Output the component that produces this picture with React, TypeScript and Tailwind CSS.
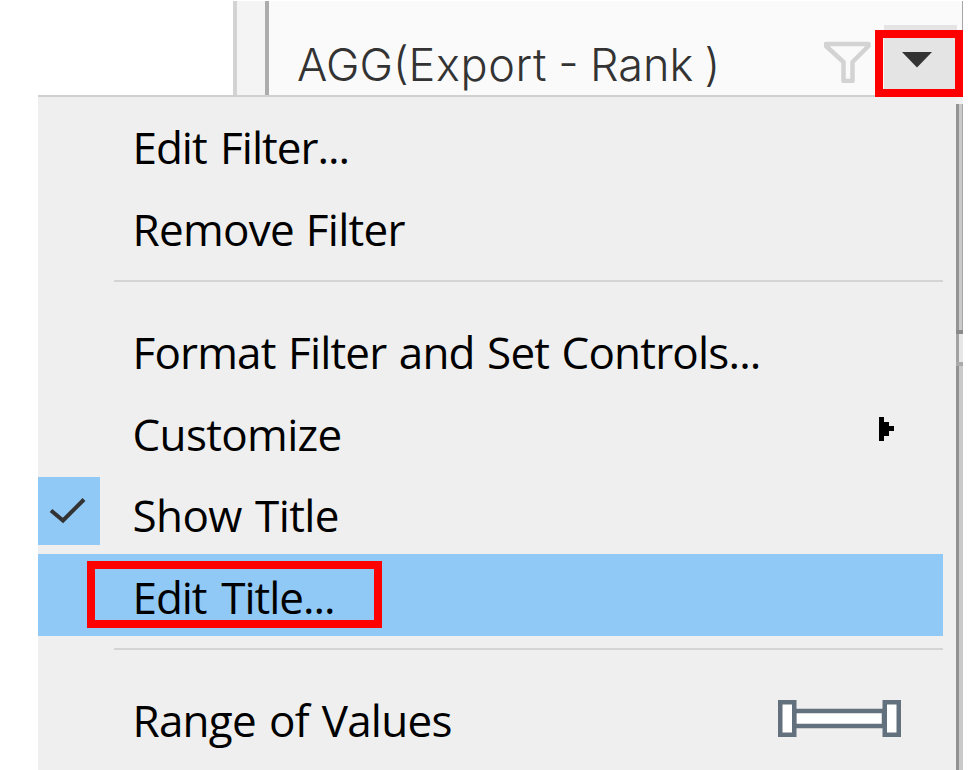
import type { ReactNode } from "react";

function Row({ label, track, selected, checked, children }: { label: string; track: string; selected?: boolean; checked?: boolean; children?: ReactNode }) {
  return (
    <div className={`flex h-[81.7px] w-[905px] shrink-0 items-center ${selected ? "bg-[#90c8f6]" : ""}`}>
      <div className="flex w-[94.5px] shrink-0 items-center">
        {checked && (
          <div className="flex h-[68px] w-[62px] items-center -mt-[5px] bg-[#90c8f6]">
            <svg width="62" height="68" viewBox="0 0 62 68" fill="none">
              <path d="M13 33.5 L25 43.5 L46 22.5" stroke="#333" strokeWidth="4" />
            </svg>
          </div>
        )}
      </div>
      <span className={`grow whitespace-nowrap pt-1 text-[44px] leading-[60px] text-black ${track}`}>{label}</span>
      {children}
    </div>
  );
}

function Separator() {
  return (
    <div className="h-[41.3px] shrink-0 pt-[12.5px]">
      <div className="ml-[76px] h-[1.5px] w-[829px] bg-[#d4d4d4]" />
    </div>
  );
}

export default function App() {
  return (
    <div className="relative flex h-[770px] w-[975px] flex-col overflow-hidden bg-white font-['Open_Sans','Noto_Sans',sans-serif]">
      <header className="ml-[233px] mt-px flex h-[94px] w-[730px] shrink-0 border-r border-[#a6a6a6] bg-[#fafafa]">
        <div className="w-9 shrink-0 border-l-4 border-r-4 border-l-[#d3d3d3] border-r-[#acacac] bg-[#f4f4f4]" />
        <div className="flex grow items-start pl-7 pt-[36px]">
          <span className="w-[527px] whitespace-nowrap font-['Inter'] text-[45px] leading-[56px] font-light text-[#333] [word-spacing:-1.3px]">AGG(<span className="tracking-[0.6px]">Export</span> - Rank )</span>
          <svg className="shrink-0" width="50" height="46" viewBox="0 0 50 46" fill="none">
            <path d="M2 7 H44.500 L44.500 9 L28.500 25 V44 H19.500 V25 L2 9 Z" stroke="#d3d3d3" strokeWidth="4.500" strokeLinejoin="round" />
          </svg>
        </div>
        <div className="mr-[5px] mt-[24px] flex w-[73px] shrink-0 justify-center bg-[#e4e4e4]">
          <svg className="-ml-[7px] mt-[27px]" width="30" height="16" viewBox="0 0 30 16">
            <path d="M0 0 H30 L15 15.500 Z" fill="#333" />
          </svg>
        </div>
      </header>
      <div className="ml-[38px] flex h-[675px] shrink-0">
        <main className="flex w-[918px] shrink-0 flex-col overflow-hidden border-t-2 border-[#d0d0d0] bg-[#efefef] pt-[7.500px]">
          <Row label="Edit Filter..." track="tracking-[-1px] [word-spacing:3px]" />
          <Row label="Remove Filter" track="tracking-[-0.7px] [word-spacing:1px]" />
          <Separator />
          <Row label="Format Filter and Set Controls..." track="tracking-[-0.82px] [word-spacing:1.8px]" />
          <Row label="Customize" track="tracking-[-0.65px]">
            <svg className="mr-[49px] -mt-[5px]" width="15" height="24" viewBox="0 0 15 24" shapeRendering="crispEdges">
              <path d="M0 0 H5 V5 H10 V9 H15 V14 H10 V19 H5 V24 H0 Z" fill="#000" />
            </svg>
          </Row>
          <Row label="Show Title" track="tracking-[-0.6px] [word-spacing:2.500px]" checked />
          <Row label="Edit Title..." track="tracking-[-1.05px] [word-spacing:4.500px]" selected />
          <Separator />
          <Row label="Range of Values" track="tracking-[-0.75px] [word-spacing:2.300px]">
            <svg className="mr-[42px]" width="123" height="37" viewBox="0 0 123 37">
              <rect x="16" y="11" width="90" height="15" fill="#fff" stroke="#62717d" strokeWidth="4.500" />
              <rect x="2.250" y="2.250" width="14" height="32.500" fill="#fff" stroke="#62717d" strokeWidth="4.500" />
              <rect x="106.750" y="2.250" width="14" height="32.500" fill="#fff" stroke="#62717d" strokeWidth="4.500" />
            </svg>
          </Row>
        </main>
        <aside className="mt-[2px] flex w-[7px] flex-col bg-[#f1f1f1] pt-[7px]">
          <div className="h-[226px] shrink-0 border-l-[3px] border-r border-l-[#949494] border-r-[#a6a6a6] bg-[#cacaca]" />
          <div className="h-1 shrink-0 bg-[#8a8a8a]" />
          <div className="h-[28px] shrink-0 border-l-[3px] border-[#a2a2a2] bg-[#e6e6e6]" />
          <div className="h-1 shrink-0 bg-[#aaa]" />
          <div className="grow border-l-[3px] border-[#929292] bg-[#cacaca]" />
        </aside>
      </div>
      <div className="absolute left-[875px] top-[30px] h-[67px] w-[88px] border-8 border-[#f00]" />
      <div className="absolute left-[87px] top-[561px] h-[67px] w-[295px] border-8 border-[#f00]" />
    </div>
  );
}
